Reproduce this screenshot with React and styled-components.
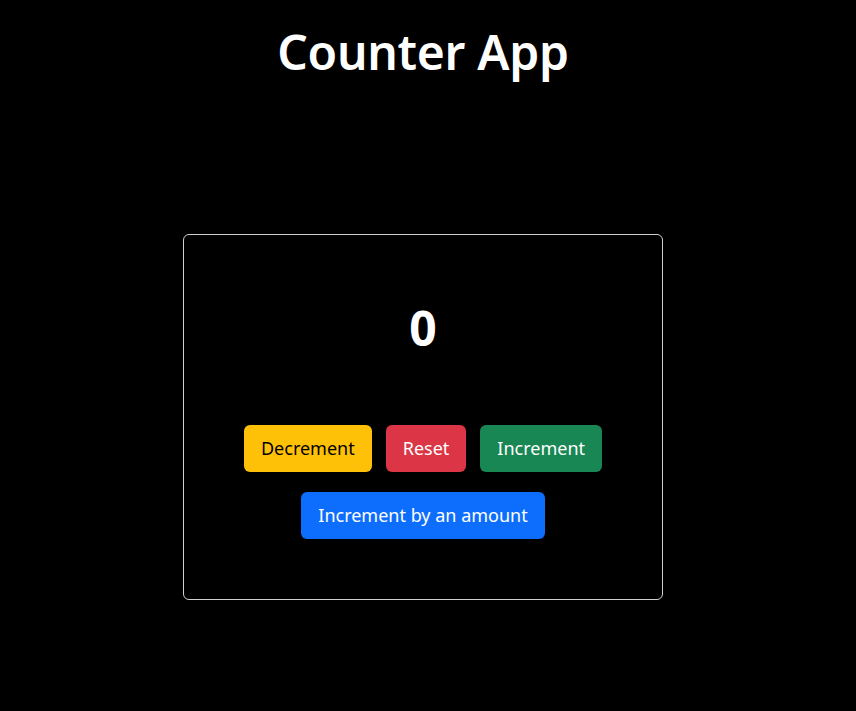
import React, { useState } from "react";
import styled, { createGlobalStyle } from "styled-components";

const GlobalStyle = createGlobalStyle`
  body {
    margin: 0;
    background: #000;
    color: #fff;
    font-family: "Noto Sans", "Open Sans", sans-serif;
  }
`;

const Page = styled.div`
  display: flex;
  flex-direction: column;
  align-items: center;
  min-height: 711px;
  padding-right: 10px;
`;

const Title = styled.h1`
  margin: 21px 0 0;
  font-size: 48px;
  font-weight: 600;
  line-height: 62px;
  letter-spacing: -0.3px;
`;

const Card = styled.div`
  box-sizing: border-box;
  width: 480px;
  height: 366px;
  margin-top: 151px;
  border: 1px solid #d0d0d0;
  border-radius: 6px;
  display: flex;
  flex-direction: column;
  align-items: center;
  padding-top: 60px;
`;

const Count = styled.div`
  font-size: 48px;
  font-weight: 700;
  line-height: 66px;
`;

const Row = styled.div`
  display: flex;
  justify-content: center;
  gap: 14px;
  margin-top: ${(p) => p.$top}px;
`;

const colors = {
  warning: ["#ffc107", "#000"],
  danger: ["#dc3545", "#fff"],
  success: ["#198754", "#fff"],
  primary: ["#0d6efd", "#fff"],
};

const Button = styled.button`
  font-family: inherit;
  font-size: 18px;
  line-height: 26px;
  padding: 10px 17px 11px;
  border: none;
  border-radius: 6px;
  cursor: pointer;
  background: ${(p) => colors[p.$variant][0]};
  color: ${(p) => colors[p.$variant][1]};
`;

export default function App() {
  const [count, setCount] = useState(0);

  return (
    <Page>
      <GlobalStyle />
      <Title>Counter App</Title>
      <Card>
        <Count>{count}</Count>
        <Row $top={64}>
          <Button $variant="warning" onClick={() => setCount(count - 1)}>
            Decrement
          </Button>
          <Button $variant="danger" onClick={() => setCount(0)}>
            Reset
          </Button>
          <Button $variant="success" onClick={() => setCount(count + 1)}>
            Increment
          </Button>
        </Row>
        <Row $top={20}>
          <Button $variant="primary" onClick={() => setCount(count + 5)}>
            Increment by an amount
          </Button>
        </Row>
      </Card>
    </Page>
  );
}
